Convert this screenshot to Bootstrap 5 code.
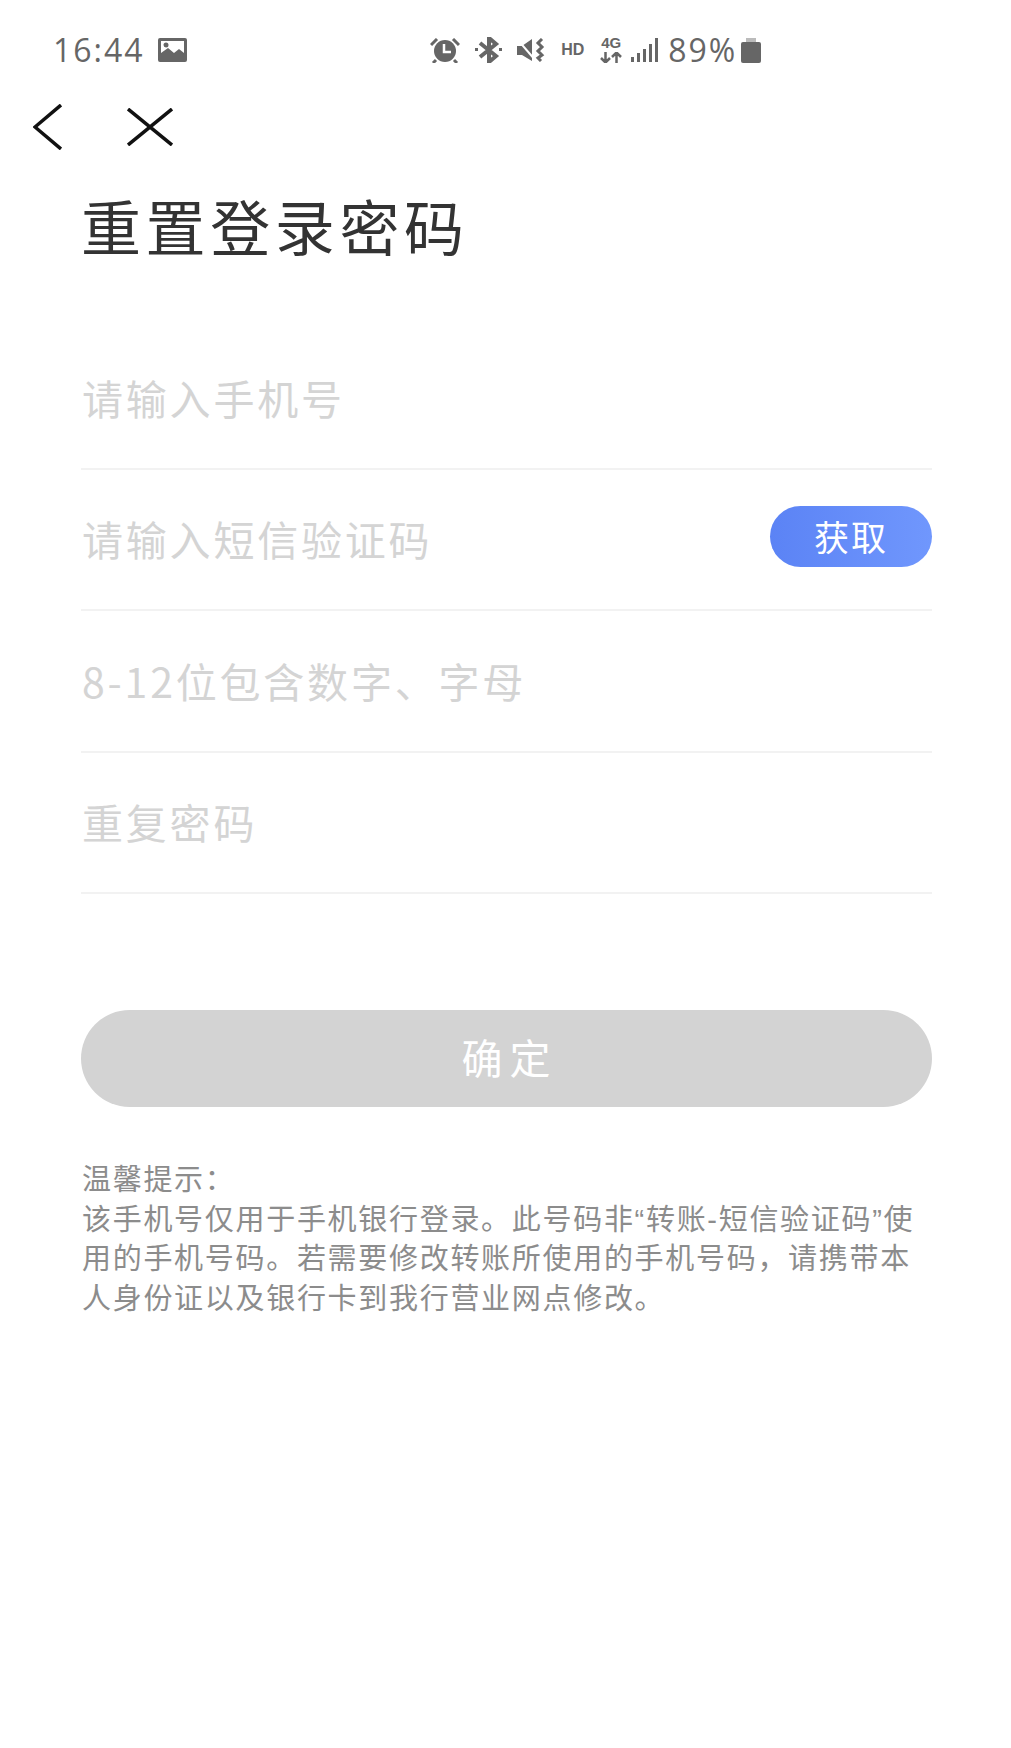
<!DOCTYPE html>
<html lang="zh-CN">
<head>
    <meta charset="UTF-8">
    <meta name="viewport" content="width=device-width, initial-scale=1.0">
    <title>重置登录密码</title>
    <link href="https://cdn.jsdelivr.net/npm/bootstrap@5.3.0/dist/css/bootstrap.min.css" rel="stylesheet">
    <style>
        body {
            font-family: "Liberation Sans", "Noto Sans CJK SC", sans-serif;
            background: #fff;
        }
        .status-bar {
            height: 100px;
            padding: 0 250px 0 53px;
            color: #666;
        }
        .status-time {
            font-family: "Open Sans", sans-serif;
            font-size: 32px;
            letter-spacing: 2px;
            width: 105px;
        }
        .status-icons {
            margin-left: auto;
        }
        .status-gap {
            margin-right: 15px;
        }
        .status-pct {
            font-family: "Open Sans", sans-serif;
            font-size: 32px;
            letter-spacing: 1.9px;
            margin: 0 4px 0 10px;
        }
        .status-hd {
            font-size: 16px;
            font-weight: 700;
            margin: 0 15px;
        }
        .status-net {
            width: 24px;
            line-height: 12px;
        }
        .status-net-label {
            font-size: 15px;
            font-weight: 700;
            display: block;
            height: 13px;
        }
        .top-nav {
            padding: 2px 0 0 33px;
            height: 52px;
            gap: 65px;
        }
        .page-body {
            padding: 0 79px 0 81px;
        }
        .page-title {
            font-family: "Noto Sans CJK SC", sans-serif;
            font-weight: 400;
            font-size: 60px;
            letter-spacing: 4.6px;
            color: #333;
            line-height: 76px;
            margin: 35px 0 65px 0;
        }
        .field-row {
            height: 141.5px;
            border-bottom: 2px solid #f2f2f2;
        }
        .field-input {
            border: 0;
            padding: 0 0 1px 1px;
            border-radius: 0;
            font-family: "Noto Sans CJK SC", sans-serif;
            font-size: 41px;
            letter-spacing: 2.8px;
            background: transparent;
        }
        .field-input::placeholder {
            color: #d4d4d4;
        }
        .field-input:focus {
            box-shadow: none;
        }
        .get-code {
            width: 162px;
            height: 61px;
            flex-shrink: 0;
            border: 0;
            border-radius: 31px;
            background: linear-gradient(90deg, #5b83f5, #7097fd);
            color: #fff;
            font-family: "Noto Sans CJK SC", sans-serif;
            font-size: 35px;
            letter-spacing: 2px;
            line-height: 1;
            padding: 0 0 3px;
            margin-bottom: 5px;
        }
        .confirm-btn {
            height: 97px;
            margin-top: 116px;
            border: 0;
            border-radius: 49px;
            font-family: "Noto Sans CJK SC", sans-serif;
            font-size: 41px;
            letter-spacing: 7px;
            padding: 0 0 4px 6px;
        }
        .confirm-btn:disabled {
            background: #d3d3d3;
            color: #fff;
            opacity: 1;
        }
        .tip-text {
            font-size: 29px;
            letter-spacing: 1.7px;
            line-height: 39.6px;
            color: #8c8c8c;
            margin: 54px 0 0 1px;
        }
    </style>
</head>
<body>
    <div class="status-bar d-flex align-items-center">
        <span class="status-time">16:44</span>
        <svg width="29" height="24" viewBox="0 0 29 24"><path fill="#666" fill-rule="evenodd" d="M2 0h25a2 2 0 0 1 2 2v20a2 2 0 0 1-2 2H2a2 2 0 0 1-2-2V2a2 2 0 0 1 2-2zm1 3v12l7-5 6 5 5-4 5 4V3zm5 1.500a2.500 2.500 0 1 1 0 5 2.500 2.500 0 0 1 0-5z"/></svg>
        <div class="status-icons d-flex align-items-center">
            <svg class="status-gap" width="30" height="25" viewBox="0 0 30 25"><circle cx="15" cy="13" r="11" fill="#666"/><path d="M14 6v8h7" stroke="#fff" stroke-width="2.500" fill="none"/><path d="M1 7l6-6M29 7l-6-6M6 22l-3 3M24 22l3 3" stroke="#666" stroke-width="3"/></svg>
            <svg class="status-gap" width="27" height="26" viewBox="0 0 27 26"><path d="M5 6l16 13-7 6V1l7 6L5 20" stroke="#666" stroke-width="4" fill="none"/><path d="M0 11h3v3H0zM24 11h3v3h-3z" fill="#666"/></svg>
            <svg width="29" height="24" viewBox="0 0 29 24"><path fill="#666" d="M0 8h5l10-7v22L5 17H0z"/><path d="M0 1l19 22" stroke="#fff" stroke-width="2"/><path d="M25 1l-4 4 4 4-4 4 4 4-4 3 3 3" stroke="#666" stroke-width="3" fill="none"/></svg>
            <span class="status-hd">HD</span>
            <div class="status-net text-center">
                <span class="status-net-label">4G</span>
                <svg width="22" height="11" viewBox="0 0 22 11"><path d="M5.500 0v10M1 6l4.500 4.500L10 6M16.500 11V1M12 5l4.500-4.500L21 5" stroke="#666" stroke-width="2.500" fill="none"/></svg>
            </div>
            <svg class="ms-2" width="27" height="24" viewBox="0 0 27 24"><path fill="#666" d="M0 19h3v5H0zM6 15h3v9H6zM12 11h3v13h-3zM18 6h3v18h-3zM24 0h3v24h-3z"/></svg>
            <span class="status-pct">89%</span>
            <svg width="20" height="25" viewBox="0 0 20 25"><path fill="#bbb" d="M5 0h10v4H5z"/><path fill="#666" d="M2 4h16a2 2 0 0 1 2 2v17a2 2 0 0 1-2 2H2a2 2 0 0 1-2-2V6a2 2 0 0 1 2-2z"/></svg>
        </div>
    </div>

    <div class="top-nav d-flex align-items-center">
        <svg width="29" height="46" viewBox="0 0 29 46"><path d="M28 1L2 23l26 22" stroke="#111" stroke-width="3.500" fill="none"/></svg>
        <svg width="46" height="38" viewBox="0 0 46 38"><path d="M1 1l44 36M45 1L1 37" stroke="#111" stroke-width="3.500" fill="none"/></svg>
    </div>

    <div class="page-body">
        <h1 class="page-title">重置登录密码</h1>

        <form>
            <div class="field-row d-flex align-items-center">
                <input class="form-control field-input" type="text" placeholder="请输入手机号">
            </div>
            <div class="field-row d-flex align-items-center">
                <input class="form-control field-input" type="text" placeholder="请输入短信验证码">
                <button type="button" class="btn get-code">获取</button>
            </div>
            <div class="field-row d-flex align-items-center">
                <input class="form-control field-input" type="password" placeholder="8-12位包含数字、字母">
            </div>
            <div class="field-row d-flex align-items-center">
                <input class="form-control field-input" type="password" placeholder="重复密码">
            </div>
            <button type="button" class="btn confirm-btn w-100 d-block" disabled>确定</button>
        </form>

        <div class="tip-text">
            温馨提示：<br>
            该手机号仅用于手机银行登录。此号码非“转账-短信验证码”使用的手机号码。若需要修改转账所使用的手机号码，请携带本人身份证以及银行卡到我行营业网点修改。
        </div>
    </div>

    <script src="https://cdn.jsdelivr.net/npm/bootstrap@5.3.0/dist/js/bootstrap.bundle.min.js"></script>
</body>
</html>
